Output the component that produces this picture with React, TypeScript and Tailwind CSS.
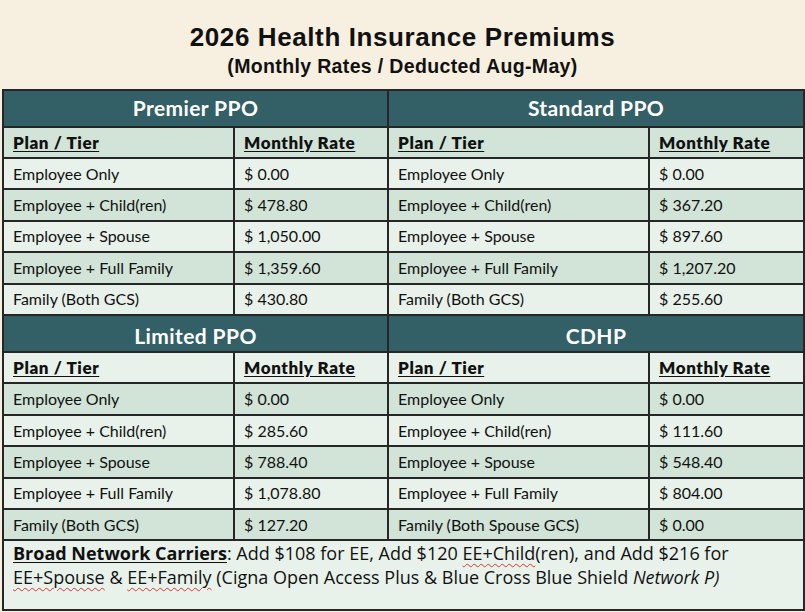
const PLANS = [
    {
        left: {
            name: 'Premier PPO',
            rows: [
                ['Employee Only', '$ 0.00'],
                ['Employee + Child(ren)', '$ 478.80'],
                ['Employee + Spouse', '$ 1,050.00'],
                ['Employee + Full Family', '$ 1,359.60'],
                ['Family (Both GCS)', '$ 430.80'],
            ],
        },
        right: {
            name: 'Standard PPO',
            rows: [
                ['Employee Only', '$ 0.00'],
                ['Employee + Child(ren)', '$ 367.20'],
                ['Employee + Spouse', '$ 897.60'],
                ['Employee + Full Family', '$ 1,207.20'],
                ['Family (Both GCS)', '$ 255.60'],
            ],
        },
        startDark: true,
        headPad: 'pb-[2px]',
    },
    {
        left: {
            name: 'Limited PPO',
            rows: [
                ['Employee Only', '$ 0.00'],
                ['Employee + Child(ren)', '$ 285.60'],
                ['Employee + Spouse', '$ 788.40'],
                ['Employee + Full Family', '$ 1,078.80'],
                ['Family (Both GCS)', '$ 127.20'],
            ],
        },
        right: {
            name: 'CDHP',
            rows: [
                ['Employee Only', '$ 0.00'],
                ['Employee + Child(ren)', '$ 111.60'],
                ['Employee + Spouse', '$ 548.40'],
                ['Employee + Full Family', '$ 804.00'],
                ['Family (Both Spouse GCS)', '$ 0.00'],
            ],
        },
        startDark: false,
        headPad: 'pt-[4px]',
    },
];

const cell = 'border-2 border-[#262626] pl-[9px] text-left align-middle';

function PlanBlock({ block }: { block: (typeof PLANS)[number] }) {
    const shade = (i: number) =>
        (i % 2 === 0) === block.startDark ? 'bg-[#d1e4d7]' : 'bg-[#e8f2ea]';

    const head = `border-2 border-[#262626] text-center ${block.headPad}`;
    const sub = `${cell} font-extrabold tracking-[0.6px]`;

    return (
        <>
            <tr className="h-[37px] bg-[#336066] text-[21px] font-extrabold tracking-[0.4px] text-white">
                <th colSpan={2} className={head}>
                    {block.left.name}
                </th>
                <th colSpan={2} className={head}>
                    {block.right.name}
                </th>
            </tr>
            <tr className={`h-[31px] text-[17px] ${shade(0)}`}>
                <th className={sub}>
                    <span className="underline underline-offset-2">Plan / Tier</span>
                </th>
                <th className={sub}>
                    <span className="underline underline-offset-2">Monthly Rate</span>
                </th>
                <th className={sub}>
                    <span className="underline underline-offset-2">Plan / Tier</span>
                </th>
                <th className={sub}>
                    <span className="underline underline-offset-2">Monthly Rate</span>
                </th>
            </tr>
            {block.left.rows.map((row, i) => (
                <tr key={row[0]} className={`h-[31.4px] text-[16px] ${shade(i + 1)}`}>
                    <td className={cell}>{row[0]}</td>
                    <td className={cell}>{row[1]}</td>
                    <td className={cell}>{block.right.rows[i][0]}</td>
                    <td className={cell}>{block.right.rows[i][1]}</td>
                </tr>
            ))}
        </>
    );
}

export default function App() {
    const squiggle = 'underline decoration-wavy decoration-[#e03030] decoration-1 underline-offset-[3px]';

    return (
        <div className="h-[612px] w-[805px] overflow-hidden bg-[#f7efdf] pt-[22px] text-[#111]">
            <div className="text-center font-['Liberation_Sans',Arial,sans-serif] font-bold">
                <h1 className="text-[26px] leading-[30px] tracking-[0.6px]">
                    2026 Health Insurance Premiums
                </h1>
                <p className="text-[19.5px] leading-[28px] tracking-[0.35px]">
                    (Monthly Rates / Deducted Aug-May)
                </p>
            </div>

            <table className="mt-[9px] ml-[2px] w-[801px] table-fixed border-collapse font-['Lato',sans-serif]">
                <colgroup>
                    <col className="w-[231px]" />
                    <col className="w-[154px]" />
                    <col className="w-[261px]" />
                    <col className="w-[155px]" />
                </colgroup>
                <tbody>
                    {PLANS.map((block) => (
                        <PlanBlock key={block.left.name} block={block} />
                    ))}
                    <tr className="h-[70px] bg-[#e8f2ea]">
                        <td
                            colSpan={4}
                            className="border-2 border-[#262626] px-[9px] pt-0 align-top font-['Open_Sans',sans-serif] text-[18px] leading-[24px]"
                        >
                            <span className="font-bold underline underline-offset-2">
                                Broad Network Carriers
                            </span>
                            : Add $108 for EE, Add $120 <span className={squiggle}>EE+Child</span>
                            (ren), and Add $216 for <span className={squiggle}>EE+Spouse</span> &amp;{' '}
                            <span className={squiggle}>EE+Family</span> (Cigna Open Access Plus &amp;
                            Blue Cross Blue Shield <em>Network P)</em>
                        </td>
                    </tr>
                </tbody>
            </table>
        </div>
    );
}
